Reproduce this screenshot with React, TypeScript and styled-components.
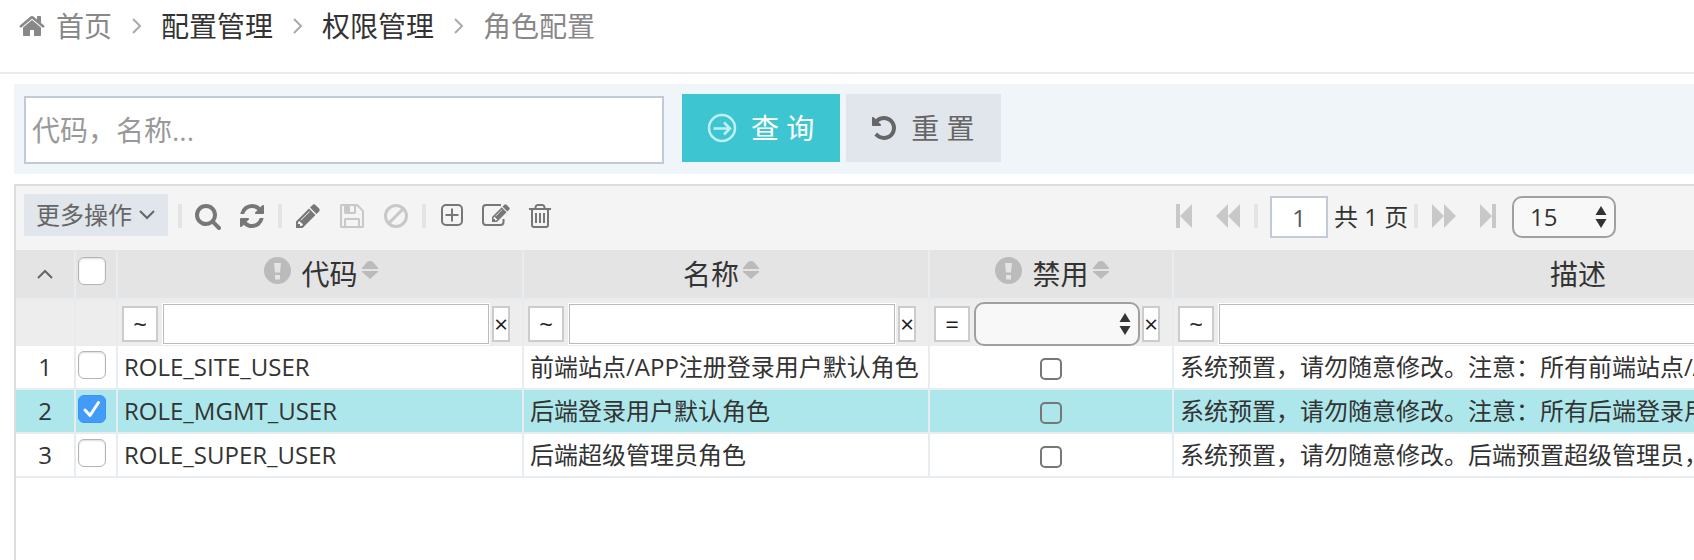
import React, { useState } from 'react';
import styled, { createGlobalStyle, css } from 'styled-components';

const GlobalStyle = createGlobalStyle`
  *, *::before, *::after { box-sizing: border-box; }
  body {
    margin: 0;
    background: #fff;
    color: #333;
    font-family: "Open Sans", "Noto Sans CJK SC", sans-serif;
    font-size: 24px;
    line-height: 32px;
  }
  button, input, select { margin: 0; font: inherit; color: inherit; }
  svg { display: block; flex: none; }
`;

const Page = styled.div`
  display: flex;
  flex-direction: column;
  min-height: 100vh;
  overflow: hidden;
`;

/* ---------- Breadcrumb ---------- */

const Breadcrumb = styled.nav`
  display: flex;
  align-items: flex-start;
  height: 74px;
  padding: 6px 18px 0;
  border-bottom: 2px solid #e7ecf1;
  font-size: 28px;
  line-height: 40px;
  white-space: nowrap;
`;

const Crumb = styled.a<{ $muted?: boolean }>`
  display: flex;
  align-items: center;
  gap: 10px;
  color: ${p => (p.$muted ? '#888' : '#333')};
  text-decoration: none;
`;

const CrumbDivider = styled.span`
  display: flex;
  align-items: center;
  justify-content: center;
  width: 49px;
  height: 40px;
  color: #aaa;
`;

/* ---------- Search bar ---------- */

const SearchBar = styled.form`
  display: flex;
  align-items: flex-start;
  margin: 10px 0 10px 14px;
  padding: 10px;
  background: #eff5f9;
`;

const Keyword = styled.input`
  width: 640px;
  height: 68px;
  margin: 2px 18px 0 0;
  padding: 0 6px;
  border: 2px solid #c2cad8;
  background: #fff;
  font-size: 28px;
  &::placeholder { color: #999; opacity: 1; }
`;

const ActionButton = styled.button<{ $primary?: boolean }>`
  display: flex;
  align-items: center;
  gap: 13px;
  height: 68px;
  margin-right: 6px;
  padding: 0 26px 0 24px;
  border: 0;
  background: ${p => (p.$primary ? '#3dc5d1' : '#e1e5ec')};
  color: ${p => (p.$primary ? '#fff' : '#666')};
  font-size: 28px;
  white-space: nowrap;
`;

/* ---------- Grid panel ---------- */

const Panel = styled.section`
  flex: 1;
  margin-left: 14px;
  border: solid #ddd;
  border-width: 2px 0 0 2px;
  overflow: hidden;
`;

const Toolbar = styled.div`
  display: flex;
  height: 64px;
  padding: 8px;
  background: #f4f4f4;
`;

const Tools = styled.div`
  display: flex;
  align-items: center;
  flex: none;
  width: 1138px;
  height: 44px;
`;

const MoreButton = styled.button`
  display: flex;
  align-items: center;
  align-self: flex-start;
  justify-content: center;
  gap: 6px;
  width: 144px;
  height: 42px;
  margin-right: 6px;
  padding: 0;
  border: 0;
  background: #e1e5ec;
  color: #666;
  white-space: nowrap;
`;

const ToolButton = styled.button`
  display: flex;
  align-items: center;
  justify-content: center;
  width: 44px;
  height: 44px;
  padding: 0;
  border: 0;
  background: none;
  color: #777;
  &:disabled { color: #c8c8c8; }
`;

const ToolDivider = styled.span`
  width: 4px;
  height: 24px;
  margin: 0 4px;
  background: #e4e4e4;
`;

const Pager = styled.div`
  display: flex;
  align-items: center;
  flex: none;
  height: 44px;
`;

const PageInput = styled.input`
  align-self: flex-end;
  width: 58px;
  height: 42px;
  margin: 0 6px 0 8px;
  padding: 0;
  border: 2px solid #c2cad8;
  background: #fff;
  color: #555;
  text-align: center;
`;

const PageTotal = styled.span`
  width: 76px;
  padding-top: 2px;
  white-space: nowrap;
`;

const SelectBox = styled.span<{ $grow?: boolean }>`
  display: grid;
  align-items: center;
  ${p => (p.$grow
    ? css`flex: 1; height: 44px;`
    : css`align-self: flex-end; width: 104px; height: 42px; margin-left: 2px;`)}
  > * { grid-area: 1 / 1; }
  > svg { justify-self: end; margin-right: 9px; pointer-events: none; }
`;

const Select = styled.select`
  width: 100%;
  height: 100%;
  padding: 0 30px 0 16px;
  border: 2px solid #a0a0a0;
  border-radius: 10px;
  background: #f8f8f8;
  appearance: none;
`;

/* ---------- Table ---------- */

const Table = styled.table`
  table-layout: fixed;
  width: max(100%, 1968px);
  border-spacing: 0;
`;

const Col = styled.col<{ $w?: number }>`
  width: ${p => (p.$w ? `${p.$w}px` : 'auto')};
`;

const cell = css`
  padding: 0;
  border: solid #e7ecf1;
  border-width: 0 2px 2px 0;
  overflow: hidden;
  white-space: nowrap;
`;

const HeadCell = styled.th`
  ${cell}
  height: 50px;
  background: #e4e4e4;
  font-size: 28px;
  font-weight: 400;
`;

const HeadLabel = styled.div<{ $sortable?: boolean }>`
  display: flex;
  align-items: flex-start;
  justify-content: center;
  height: 48px;
  padding: 7px ${p => (p.$sortable ? 10 : 0)}px 0 0;
  line-height: 34px;
  .hint { margin: 0 10px 0 12px; color: #bbb; }
  .sort { margin: 4px 0 0 4px; color: #bbb; }
`;

const IconCenter = styled.div`
  display: flex;
  align-items: center;
  justify-content: center;
  height: 48px;
  color: #666;
`;

const FilterCell = styled.td`
  ${cell}
  border-bottom: 0;
  height: 46px;
  background: #ededed;
`;

const Filter = styled.div`
  display: flex;
  align-items: center;
  height: 46px;
  padding: 2px 12px 0 4px;
`;

const FilterButton = styled.button<{ $narrow?: boolean }>`
  flex: none;
  width: ${p => (p.$narrow ? 18 : 36)}px;
  height: 36px;
  margin: ${p => (p.$narrow ? '0 0 0 2px' : '0 4px 0 0')};
  padding: 0;
  border: 2px solid #ccc;
  background: #fff;
  color: #222;
  font-size: 24px;
  line-height: 30px;
`;

const FilterField = styled.span`
  flex: 1;
  display: flex;
  height: 42px;
  border: 1px solid #fff;
`;

const FilterInput = styled.input`
  width: 100%;
  padding: 0 8px;
  border: 1px solid #bbb;
  background: #fff;
`;

const Row = styled.tr<{ $selected?: boolean }>`
  background: ${p => (p.$selected ? '#ade7eb' : '#fff')};
`;

const Cell = styled.td<{ $center?: boolean }>`
  ${cell}
  height: 44px;
  padding: 0 ${p => (p.$center ? 0 : 6)}px;
  text-align: ${p => (p.$center ? 'center' : 'left')};
  vertical-align: middle;
`;

const CheckSlot = styled.div<{ $head?: boolean }>`
  display: flex;
  height: ${p => (p.$head ? 48 : 42)}px;
  padding: ${p => (p.$head ? 7 : 5)}px 2px 0;
`;

const RowCheck = styled.input`
  width: 28px;
  height: 28px;
  border: 1px solid #b4b4b4;
  border-radius: 6px;
  background: #fff;
  box-shadow: inset 0 1px 2px #ddd;
  appearance: none;
  &:checked {
    border-color: #3b93f5;
    background: #429bf9 url("data:image/svg+xml,%3Csvg xmlns='http://www.w3.org/2000/svg' viewBox='0 0 26 26'%3E%3Cpath d='M6 14l5 5.500L19.500 6.500' fill='none' stroke='white' stroke-width='3' stroke-linecap='round' stroke-linejoin='round'/%3E%3C/svg%3E") center / 26px 26px no-repeat;
    box-shadow: none;
  }
`;

const FlagSlot = styled.div`
  display: flex;
  justify-content: center;
  height: 42px;
  padding-top: 12px;
`;

const FlagCheck = styled.input`
  width: 22px;
  height: 22px;
  border: 2px solid #777;
  border-radius: 5px;
  background: transparent;
  appearance: none;
`;

/* ---------- Icons ---------- */

const solid = {
  home: 'M1472 992v480q0 26-19 45t-45 19h-384v-384h-256v384h-384q-26 0-45-19t-19-45v-480q0-1 .5-3t.5-3l575-474 575 474q1 2 1 6zm223-69l-62 74q-8 9-21 11h-3q-13 0-21-7l-692-577-692 577q-12 8-24 7-13-2-21-11l-62-74q-8-10-7-23.500t11-21.500l719-599q32-26 76-26t76 26l244 204v-195q0-14 9-23t23-9h192q14 0 23 9t9 23v408l219 182q10 8 11 21.500t-7 23.500z',
  undo: 'M1664 896q0 156-61 298t-164 245-245 164-298 61q-172 0-327-72.500t-264-204.500q-7-10-6.500-22.500t8.500-20.500l137-138q10-9 25-9 16 2 23 12 73 95 179 147t225 52q104 0 198.500-40.500t163.500-109.500 109.500-163.500 40.500-198.500-40.500-198.500-109.500-163.500-163.500-109.500-198.500-40.500q-98 0-188 35.500t-160 101.500l137 138q31 30 14 69-17 40-59 40h-448q-26 0-45-19t-19-45v-448q0-42 40-59 39-17 69 14l130 129q107-101 244.500-156.500t284.500-55.500q156 0 298 61t245 164 164 245 61 298z',
  search: 'M1216 832q0-185-131.500-316.500t-316.500-131.500-316.500 131.500-131.500 316.500 131.500 316.500 316.500 131.500 316.500-131.500 131.500-316.500zm512 832q0 52-38 90t-90 38q-54 0-90-38l-343-342q-179 124-399 124-143 0-273.500-55.500t-225-150-150-225-55.500-273.500 55.500-273.500 150-225 225-150 273.500-55.500 273.500 55.500 225 150 150 225 55.500 273.500q0 220-124 399l343 343q37 37 37 90z',
  refresh: 'M1639 1056q0 5-1 7-64 268-268 434.500t-478 166.500q-146 0-282.500-55t-243.500-157l-129 129q-19 19-45 19t-45-19-19-45v-448q0-26 19-45t45-19h448q26 0 45 19t19 45-19 45l-137 137q71 66 161 102t187 36q134 0 250-65t186-179q11-17 53-117 8-23 30-23h192q13 0 22.500 9.500t9.500 22.500zm25-800v448q0 26-19 45t-45 19h-448q-26 0-45-19t-19-45 19-45l138-138q-148-137-349-137-134 0-250 65t-186 179q-11 17-53 117-8 23-30 23h-199q-13 0-22.500-9.500t-9.500-22.500v-7q65-268 270-434.500t480-166.500q146 0 284 55.500t245 156.500l130-129q19-19 45-19t45 19 19 45z',
  pencil: 'M491 1536l91-91-235-235-91 91v107h128v128h107zm523-928q0-22-22-22-10 0-17 7l-542 542q-7 7-7 17 0 22 22 22 10 0 17-7l542-542q7-7 7-17zm-54-192l416 416-832 832h-416v-416zm683 96q0 53-37 90l-166 166-416-416 166-165q36-38 90-38 53 0 91 38l235 234q37 39 37 91z',
  save: 'M512 1536h768v-384h-768v384zm896 0h128v-896q0-14-10-38.500t-20-34.500l-281-281q-10-10-34-20t-39-10v416q0 40-28 68t-68 28h-576q-40 0-68-28t-28-68v-416h-128v1280h128v-416q0-40 28-68t68-28h832q40 0 68 28t28 68v416zm-384-928v-320q0-13-9.500-22.500t-22.500-9.500h-192q-13 0-22.500 9.500t-9.500 22.500v320q0 13 9.500 22.500t22.500 9.500h192q13 0 22.500-9.500t9.500-22.500zm640 32v928q0 40-28 68t-68 28h-1344q-40 0-68-28t-28-68v-1344q0-40 28-68t68-28h928q40 0 88 20t76 48l280 280q28 28 48 76t20 88z',
};

const SolidIcon = ({ name }: { name: keyof typeof solid }) => (
  <svg width="28" height="28" viewBox="0 0 1792 1792" fill="currentColor" aria-hidden="true">
    <path d={solid[name]} />
  </svg>
);

const ArrowCircleIcon = () => (
  <svg width="32" height="32" viewBox="0 0 32 32" fill="none" stroke="#c0f0f4" strokeWidth="2.5" aria-hidden="true">
    <circle cx="16" cy="16" r="13" />
    <path d="M7.500 16.500h16M18 10.500l6 6-6 6" />
  </svg>
);

const BanIcon = () => (
  <svg width="24" height="24" viewBox="0 0 24 24" fill="none" stroke="currentColor" strokeWidth="3" aria-hidden="true">
    <circle cx="12" cy="12" r="10.500" />
    <path d="M4.500 19.500l15-15" />
  </svg>
);

const AddIcon = () => (
  <svg width="24" height="24" viewBox="0 0 24 24" fill="none" stroke="currentColor" strokeWidth="2" aria-hidden="true">
    <rect x="2" y="1" width="20" height="20" rx="4" />
    <path d="M12 4.500v13M5.500 11h13" />
  </svg>
);

const EditIcon = () => (
  <svg width="28" height="24" viewBox="0 0 28 24" fill="none" stroke="currentColor" strokeWidth="2" aria-hidden="true">
    <path d="M19 1H4a3 3 0 0 0-3 3v14a3 3 0 0 0 3 3h14.500a3 3 0 0 0 3-3v-3" />
    <g transform="translate(8.500 -1.500) scale(0.0117)" fill="currentColor" stroke="none">
      <path d={solid.pencil} />
    </g>
  </svg>
);

const TrashIcon = () => (
  <svg width="24" height="24" viewBox="0 0 24 24" fill="none" stroke="currentColor" strokeWidth="2" aria-hidden="true">
    <path d="M1 5h22M7 5l1-3q.5-1 1.500-1h5q1 0 1.500 1l1 3M4 5v16q0 2 2 2h12q2 0 2-2V5M8 9v10M12 9v10M16 9v10" />
  </svg>
);

const Chevron = ({ d, w, h }: { d: string; w: number; h: number }) => (
  <svg width={w} height={h} viewBox={`0 0 ${w} ${h}`} fill="none" stroke="currentColor" strokeWidth="2" aria-hidden="true">
    <path d={d} />
  </svg>
);

const CrumbArrow = () => <Chevron w={10} h={16} d="M1 1l7 7-7 7" />;

const PagerIcon = ({ d }: { d: string }) => (
  <svg width="24" height="24" viewBox="0 0 24 24" fill="currentColor" aria-hidden="true">
    <path d={d} />
  </svg>
);

const HintIcon = () => (
  <svg className="hint" width="27" height="27" viewBox="0 0 27 27" aria-hidden="true">
    <circle cx="13.500" cy="13.500" r="13.500" fill="currentColor" />
    <path d="M10 6h7l-1 9.500h-5zM11 18h5v4.500h-5z" fill="#e4e4e4" />
  </svg>
);

const SortIcon = () => (
  <svg className="sort" width="16" height="18" viewBox="0 0 16 18" fill="currentColor" aria-hidden="true">
    <path d="M0 8V7l5-6q1-1 3-1t3 1l5 6v1zM0 10h16v1l-8 7-8-7z" />
  </svg>
);

const StepperIcon = () => (
  <svg width="12" height="22" viewBox="0 0 12 22" fill="#333" aria-hidden="true">
    <path d="M6 0l5.500 9H.5zM6 22L.5 13h11z" />
  </svg>
);

/* ---------- Data ---------- */

const roles = [
  { code: 'ROLE_SITE_USER', name: '前端站点/APP注册登录用户默认角色', note: '系统预置，请勿随意修改。注意：所有前端站点/APP注册登录用户默认角色' },
  { code: 'ROLE_MGMT_USER', name: '后端登录用户默认角色', note: '系统预置，请勿随意修改。注意：所有后端登录用户默认角色' },
  { code: 'ROLE_SUPER_USER', name: '后端超级管理员角色', note: '系统预置，请勿随意修改。后端预置超级管理员，' },
];

const TextFilter = ({ label }: { label: string }) => (
  <FilterCell>
    <Filter>
      <FilterButton type="button">~</FilterButton>
      <FilterField><FilterInput type="text" aria-label={label} /></FilterField>
      <FilterButton type="button" $narrow>×</FilterButton>
    </Filter>
  </FilterCell>
);

export default function App() {
  const [selected, setSelected] = useState<number[]>([1]);
  const toggle = (i: number) =>
    setSelected(s => (s.includes(i) ? s.filter(n => n !== i) : [...s, i]));

  return (
    <Page>
      <GlobalStyle />
      <Breadcrumb>
        <Crumb href="#" $muted><SolidIcon name="home" />首页</Crumb>
        <CrumbDivider><CrumbArrow /></CrumbDivider>
        <Crumb href="#">配置管理</Crumb>
        <CrumbDivider><CrumbArrow /></CrumbDivider>
        <Crumb href="#">权限管理</Crumb>
        <CrumbDivider><CrumbArrow /></CrumbDivider>
        <Crumb href="#" $muted>角色配置</Crumb>
      </Breadcrumb>

      <SearchBar onSubmit={e => e.preventDefault()}>
        <Keyword type="text" placeholder="代码，名称..." aria-label="代码，名称" />
        <ActionButton type="submit" $primary><ArrowCircleIcon />查 询</ActionButton>
        <ActionButton type="reset"><SolidIcon name="undo" />重 置</ActionButton>
      </SearchBar>

      <Panel>
        <Toolbar>
          <Tools>
            <MoreButton type="button">更多操作<Chevron w={18} h={12} d="M2 2l7 7 7-7" /></MoreButton>
            <ToolDivider />
            <ToolButton type="button" aria-label="搜索"><SolidIcon name="search" /></ToolButton>
            <ToolButton type="button" aria-label="刷新"><SolidIcon name="refresh" /></ToolButton>
            <ToolDivider />
            <ToolButton type="button" aria-label="编辑"><SolidIcon name="pencil" /></ToolButton>
            <ToolButton type="button" aria-label="保存" disabled><SolidIcon name="save" /></ToolButton>
            <ToolButton type="button" aria-label="取消" disabled><BanIcon /></ToolButton>
            <ToolDivider />
            <ToolButton type="button" aria-label="新增"><AddIcon /></ToolButton>
            <ToolButton type="button" aria-label="修改"><EditIcon /></ToolButton>
            <ToolButton type="button" aria-label="删除"><TrashIcon /></ToolButton>
          </Tools>
          <Pager>
            <ToolButton type="button" aria-label="首页" disabled><PagerIcon d="M4 0h4v24H4zM20 0v24L8 12z" /></ToolButton>
            <ToolButton type="button" aria-label="上一页" disabled><PagerIcon d="M12 0v24L0 12zM24 0v24L12 12z" /></ToolButton>
            <ToolDivider />
            <PageInput type="text" defaultValue="1" aria-label="页码" />
            <PageTotal>共 1 页</PageTotal>
            <ToolDivider />
            <ToolButton type="button" aria-label="下一页" disabled><PagerIcon d="M0 0v24l12-12zM12 0v24l12-12z" /></ToolButton>
            <ToolButton type="button" aria-label="末页" disabled><PagerIcon d="M4 0v24l12-12zM16 0h4v24h-4z" /></ToolButton>
            <SelectBox>
              <Select aria-label="每页条数" defaultValue="15">
                <option>15</option>
                <option>30</option>
              </Select>
              <StepperIcon />
            </SelectBox>
          </Pager>
        </Toolbar>

        <Table>
          <colgroup>
            <Col $w={60} /><Col $w={42} /><Col $w={406} /><Col $w={406} /><Col $w={244} /><Col />
          </colgroup>
          <thead>
            <tr>
              <HeadCell><IconCenter><Chevron w={18} h={12} d="M2 10l7-7 7 7" /></IconCenter></HeadCell>
              <HeadCell>
                <CheckSlot $head><RowCheck type="checkbox" aria-label="全选" /></CheckSlot>
              </HeadCell>
              <HeadCell><HeadLabel $sortable><HintIcon />代码<SortIcon /></HeadLabel></HeadCell>
              <HeadCell><HeadLabel $sortable>名称<SortIcon /></HeadLabel></HeadCell>
              <HeadCell><HeadLabel $sortable><HintIcon />禁用<SortIcon /></HeadLabel></HeadCell>
              <HeadCell><HeadLabel>描述</HeadLabel></HeadCell>
            </tr>
            <tr>
              <FilterCell />
              <FilterCell />
              <TextFilter label="代码" />
              <TextFilter label="名称" />
              <FilterCell>
                <Filter>
                  <FilterButton type="button">=</FilterButton>
                  <SelectBox $grow>
                    <Select aria-label="禁用" defaultValue="">
                      <option value=""></option>
                      <option value="1">是</option>
                      <option value="0">否</option>
                    </Select>
                    <StepperIcon />
                  </SelectBox>
                  <FilterButton type="button" $narrow>×</FilterButton>
                </Filter>
              </FilterCell>
              <TextFilter label="描述" />
            </tr>
          </thead>
          <tbody>
            {roles.map((role, i) => (
              <Row key={role.code} $selected={selected.includes(i)}>
                <Cell $center>{i + 1}</Cell>
                <Cell $center>
                  <CheckSlot>
                    <RowCheck
                      type="checkbox"
                      aria-label={role.code}
                      checked={selected.includes(i)}
                      onChange={() => toggle(i)}
                    />
                  </CheckSlot>
                </Cell>
                <Cell>{role.code}</Cell>
                <Cell>{role.name}</Cell>
                <Cell $center>
                  <FlagSlot><FlagCheck type="checkbox" aria-label={`${role.code} 禁用`} /></FlagSlot>
                </Cell>
                <Cell>{role.note}</Cell>
              </Row>
            ))}
          </tbody>
        </Table>
      </Panel>
    </Page>
  );
}
